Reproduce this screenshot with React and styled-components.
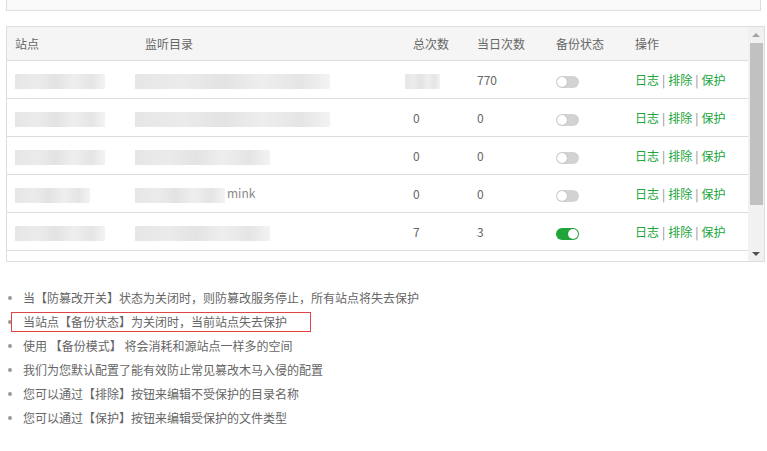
import React from "react";
import styled, { createGlobalStyle } from "styled-components";

const GlobalStyle = createGlobalStyle`
  html, body {
    margin: 0;
    padding: 0;
    background: #fff;
  }
  body {
    font-family: "Noto Sans CJK SC", "Noto Sans", "Liberation Sans", sans-serif;
    font-size: 12px;
    color: #666;
  }
`;

const Page = styled.div`
  width: 767px;
  height: 451px;
  overflow: hidden;
  padding: 0 2px 0 6px;
  box-sizing: border-box;
`;

const TopBox = styled.div`
  height: 10px;
  margin-right: 4px;
  border: 1px solid #ddd;
  border-top: none;
  background: #f9f9f9;
`;

const TableWrap = styled.div`
  margin-top: 15px;
  height: 236px;
  border: 1px solid #ddd;
  display: flex;
  box-sizing: border-box;
`;

const TableArea = styled.div`
  flex: 1;
  overflow: hidden;
`;

const Table = styled.table`
  width: 100%;
  border-collapse: collapse;
  table-layout: fixed;
`;

const Th = styled.th`
  height: 33px;
  padding: 0 0 0 8px;
  text-align: left;
  font-weight: normal;
  color: #666;
  background: #f5f5f5;
  border-bottom: 1px solid #ddd;
  width: ${(p) => p.$w || "auto"};
`;

const Td = styled.td`
  height: 37px;
  padding: 0 0 0 8px;
  border-bottom: 1px solid #ddd;
  color: #666;
  white-space: nowrap;
  overflow: visible;
`;

const Redact = styled.span`
  display: inline-block;
  vertical-align: middle;
  width: ${(p) => p.$w}px;
  height: ${(p) => p.$h || 15}px;
  margin-left: ${(p) => p.$ml || 0}px;
  background: linear-gradient(
    90deg,
    #e6e6e6 0%,
    #ebebeb 25%,
    #e3e3e3 45%,
    #eeeeee 65%,
    #e5e5e5 85%,
    #f3f3f3 100%
  );
  filter: blur(0.6px);
`;

const Hint = styled.span`
  color: #888;
  margin-left: 2px;
`;

const Toggle = styled.span`
  display: inline-block;
  position: relative;
  vertical-align: middle;
  width: 23px;
  height: 12px;
  border-radius: 7px;
  background: ${(p) => (p.$on ? "#20a53a" : "#d2d2d2")};
  &::after {
    content: "";
    position: absolute;
    top: 1px;
    left: ${(p) => (p.$on ? "12px" : "1px")};
    width: 10px;
    height: 10px;
    border-radius: 50%;
    background: #fff;
    box-shadow: 0 0 1px rgba(0, 0, 0, 0.25);
  }
`;

const Link = styled.a`
  color: #20a53a;
  text-decoration: none;
`;

const Sep = styled.span`
  color: #888;
  margin: 0 3px;
`;

const ScrollBar = styled.div`
  width: 16px;
  background: #f1f1f1;
  display: flex;
  flex-direction: column;
  align-items: center;
`;

const Arrow = styled.div`
  height: 15px;
  width: 100%;
  display: flex;
  align-items: center;
  justify-content: center;
  &::before {
    content: "";
    border-left: 4px solid transparent;
    border-right: 4px solid transparent;
    ${(p) =>
      p.$down
        ? "border-top: 4px solid #505050;"
        : "border-bottom: 4px solid #a3a3a3;"}
  }
`;

const Thumb = styled.div`
  width: 13px;
  height: 162px;
  background: #c1c1c1;
  margin-top: 1px;
`;

const Track = styled.div`
  flex: 1;
`;

const Tips = styled.ul`
  list-style: none;
  margin: 24px 0 0;
  padding: 0;
`;

const Tip = styled.li`
  height: 24px;
  line-height: 24px;
  display: flex;
  align-items: center;
  &::before {
    content: "";
    width: 4px;
    height: 4px;
    border-radius: 50%;
    background: #999;
    margin: 0 0 0 2px;
  }
`;

const TipText = styled.span`
  margin-left: ${(p) => (p.$boxed ? -1 : 11)}px;
  ${(p) =>
    p.$boxed
      ? `border: 1px solid #e04545;
         padding: 0 23px 0 11px;
         line-height: 18px;`
      : ""}
`;

const rows = [
  { site: 90, path: 195, total: <Redact $w={35} $ml={-8} />, today: "770", on: false },
  { site: 90, path: 195, total: "0", today: "0", on: false },
  { site: 90, path: 135, total: "0", today: "0", on: false },
  { site: 75, path: 90, tail: "mink", total: "0", today: "0", on: false },
  { site: 90, path: 135, total: "7", today: "3", on: true },
];

const tips = [
  "当【防篡改开关】状态为关闭时，则防篡改服务停止，所有站点将失去保护",
  "当站点【备份状态】为关闭时，当前站点失去保护",
  "使用 【备份模式】 将会消耗和源站点一样多的空间",
  "我们为您默认配置了能有效防止常见篡改木马入侵的配置",
  "您可以通过【排除】按钮来编辑不受保护的目录名称",
  "您可以通过【保护】按钮来编辑受保护的文件类型",
];

export default function App() {
  return (
    <Page>
      <GlobalStyle />
      <TopBox />
      <TableWrap>
        <TableArea>
          <Table>
            <thead>
              <tr>
                <Th $w="122px">站点</Th>
                <Th $w="260px">监听目录</Th>
                <Th $w="56px">总次数</Th>
                <Th $w="71px">当日次数</Th>
                <Th $w="71px">备份状态</Th>
                <Th>操作</Th>
              </tr>
            </thead>
            <tbody>
              {rows.map((r, i) => (
                <tr key={i}>
                  <Td>
                    <Redact $w={r.site} />
                  </Td>
                  <Td>
                    <Redact $w={r.path} $ml={-10} />
                    {r.tail && <Hint>{r.tail}</Hint>}
                  </Td>
                  <Td>{r.total}</Td>
                  <Td>{r.today}</Td>
                  <Td>
                    <Toggle $on={r.on} />
                  </Td>
                  <Td>
                    <Link>日志</Link>
                    <Sep>|</Sep>
                    <Link>排除</Link>
                    <Sep>|</Sep>
                    <Link>保护</Link>
                  </Td>
                </tr>
              ))}
              <tr>
                <Td />
                <Td />
                <Td />
                <Td />
                <Td>
                  <Toggle />
                </Td>
                <Td />
              </tr>
            </tbody>
          </Table>
        </TableArea>
        <ScrollBar>
          <Arrow />
          <Thumb />
          <Track />
          <Arrow $down />
        </ScrollBar>
      </TableWrap>
      <Tips>
        {tips.map((t, i) => (
          <Tip key={i}>
            <TipText $boxed={i === 1}>{t}</TipText>
          </Tip>
        ))}
      </Tips>
    </Page>
  );
}
